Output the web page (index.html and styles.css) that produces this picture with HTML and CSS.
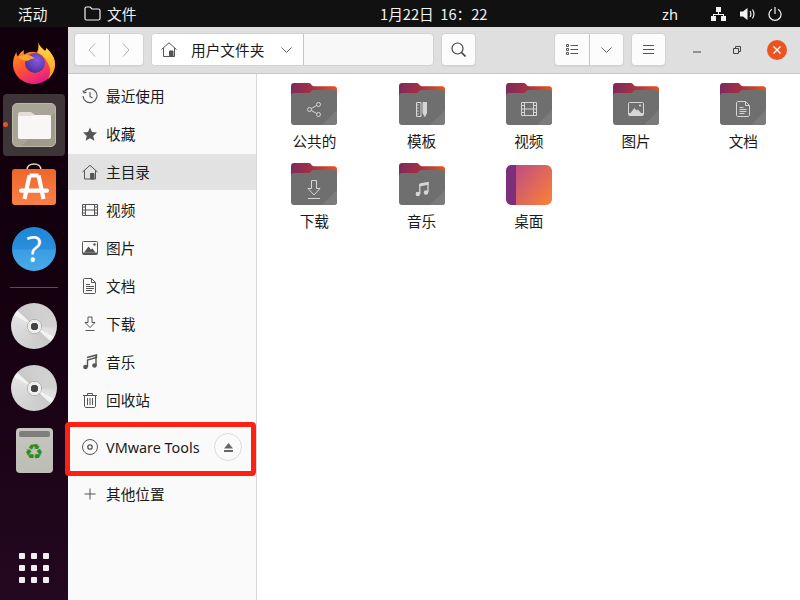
FILE: index.html
```html
<!DOCTYPE html>
<html lang="zh">
<head>
    <meta charset="UTF-8">
    <title>文件</title>
    <link rel="stylesheet" href="styles.css">
</head>
<body>
    <svg class="defs" width="0" height="0">
        <defs>
            <linearGradient id="folderBack" x1="0" y1="0" x2="1" y2="0">
                <stop offset="0" stop-color="#7d2a5c"/>
                <stop offset="0.5" stop-color="#a8333f"/>
                <stop offset="1" stop-color="#e9541f"/>
            </linearGradient>
            <linearGradient id="desktopFill" x1="0" y1="0" x2="1" y2="0.7">
                <stop offset="0" stop-color="#b5458f"/>
                <stop offset="1" stop-color="#f47a3e"/>
            </linearGradient>
            <linearGradient id="helpFill" x1="0" y1="0" x2="0" y2="1">
                <stop offset="0" stop-color="#1f86d6"/>
                <stop offset="0.5" stop-color="#2a8fdc"/>
                <stop offset="0.52" stop-color="#3a9de2"/>
                <stop offset="1" stop-color="#4aaae8"/>
            </linearGradient>
            <linearGradient id="storeFill" x1="0" y1="0" x2="0" y2="1">
                <stop offset="0" stop-color="#ee672b"/>
                <stop offset="1" stop-color="#f98048"/>
            </linearGradient>
            <linearGradient id="foxBody" x1="0.2" y1="0.1" x2="0.6" y2="1">
                <stop offset="0" stop-color="#ff9a18"/>
                <stop offset="0.55" stop-color="#ff4f3a"/>
                <stop offset="1" stop-color="#e5198a"/>
            </linearGradient>
            <linearGradient id="foxFlame" x1="0" y1="0" x2="0" y2="1">
                <stop offset="0" stop-color="#ffe14a"/>
                <stop offset="1" stop-color="#ff9a10"/>
            </linearGradient>
            <radialGradient id="foxGlobe" cx="0.6" cy="0.35" r="0.7">
                <stop offset="0" stop-color="#8a5ae0"/>
                <stop offset="1" stop-color="#4a2c9a"/>
            </radialGradient>
            <symbol id="folder" viewBox="0 0 46 42">
                <path d="M3 0h15c2 0 2.500 3.200 5 3.200h20c1.800 0 3 1.200 3 3V30H0V3c0-1.800 1.200-3 3-3z" fill="url(#folderBack)"/>
                <path d="M3 10h15c2 0 2-3 4.500-3H43c1.800 0 3 1.200 3 3v29c0 1.800-1.200 3-3 3H3c-1.800 0-3-1.200-3-3V13c0-1.800 1.200-3 3-3z" fill="#6f6f6f"/>
                <path d="M46 27v12c0 1.800-1.200 3-3 3H31z" fill="#7b7b7b"/>
            </symbol>
        </defs>
    </svg>

    <header class="topbar">
        <span class="activities">活动</span>
        <svg class="top-folder" width="17" height="15" viewBox="0 0 17 15" fill="none" stroke="#f2f2f2" stroke-width="1.200">
            <path d="M1 12.500V2.500C1 1.500 1.600 1 2.500 1h3.700l1.800 2h6.500c1 0 1.500.6 1.500 1.500v8c0 1-.6 1.500-1.500 1.500h-12C1.500 14 1 13.500 1 12.500z"/>
        </svg>
        <span class="top-app">文件</span>
        <span class="clock">1月22日&nbsp; 16：22</span>
        <span class="lang">zh</span>
        <svg class="tray-net" width="15" height="14" viewBox="0 0 15 14" fill="#f2f2f2">
            <path d="M5 0h5v5H8v2h5v2h2v5h-5V9h2V8H3v1h2v5H0V9h2V7h5V5H5z"/>
        </svg>
        <svg class="tray-vol" width="15" height="14" viewBox="0 0 15 14">
            <path d="M0 4.500h3L7.500 1v12L3 9.500H0z" fill="#f2f2f2"/>
            <path d="M10 4c1 1.700 1 4.300 0 6M12.500 2.500c1.800 2.800 1.800 6.200 0 9" fill="none" stroke="#f2f2f2" stroke-width="1.200"/>
        </svg>
        <svg class="tray-power" width="14" height="14" viewBox="0 0 14 14" fill="none" stroke="#f2f2f2" stroke-width="1.200">
            <path d="M4 2.200a6 6 0 1 0 6 0M7 0v7"/>
        </svg>
    </header>

    <div class="desktop">
        <nav class="dock">
            <div class="dock-slot">
                <svg width="44" height="44" viewBox="0 0 44 44">
                    <path d="M26 1c1 4 4 6 7 9 1-1 1.500-2 1.500-3 5 5 8.500 10 8.500 16 0 11-9.500 20-21 20S1 34 1 23c0-5 1.500-9 3.500-12 0 2 .5 3.500 1.500 4.500C7.500 12 10 10 12 9c-.5 2-.3 3.500.5 4.500 3-2.500 8-3.500 12-2C27 8 27 4 26 1z" fill="url(#foxBody)"/>
                    <path d="M26 1c1 4 4 6 7 9 1-1 1.500-2 1.500-3 5 5 8.500 10 8.500 16 0 6-2.500 11-7 15 2-4 3-8 1-13-2-6-6-11-11-13 1-4 1-8 0-11z" fill="url(#foxFlame)"/>
                    <circle cx="23" cy="22" r="10" fill="url(#foxGlobe)"/>
                    <path d="M6 16c3-2 8-2.500 12-1.500 3 1 5 3 5 3-2.500-.3-5 .5-6.500 2-3 .8-8-1-10.500-3.500z" fill="#ffa62b"/>
                </svg>
            </div>
            <div class="dock-slot is-active">
                <i class="run-dot"></i>
                <div class="files-tile">
                    <svg width="33" height="27" viewBox="0 0 33 27">
                        <path d="M2 0h11l4 3h14c1.200 0 2 .8 2 2v20c0 1.200-.8 2-2 2H2c-1.200 0-2-.8-2-2V2C0 .8.800 0 2 0z" fill="#e3dfd8"/>
                        <path d="M2 4h10c2 0 3-1 5-1h14c1.200 0 2 .8 2 2v20c0 1.200-.8 2-2 2H2c-1.200 0-2-.8-2-2V6c0-1.200.8-2 2-2z" fill="#f8f7f5"/>
                    </svg>
                </div>
            </div>
            <div class="dock-slot">
                <svg class="store-icon" width="44" height="42" viewBox="0 0 44 42">
                    <path d="M15 7c0-8 14-8 14 0" fill="none" stroke="#eadbc8" stroke-width="1.600"/>
                    <rect y="6" width="44" height="36" rx="3" fill="url(#storeFill)"/>
                    <path d="M17.500 12.500h9M17.500 12.500 12.500 36M26.500 12.500l5 23.500" fill="none" stroke="#fff" stroke-width="4.200"/>
                    <rect x="7" y="25.500" width="30" height="4.200" rx="2" fill="#fff"/>
                </svg>
            </div>
            <div class="dock-slot">
                <div class="help-icon">
                    <svg width="44" height="44" viewBox="0 0 44 44"><circle cx="22" cy="22" r="22" fill="url(#helpFill)"/></svg>
                    <span class="help-mark">?</span>
                </div>
            </div>
            <hr class="dock-sep">
            <div class="dock-slot"><div class="cd"><i></i></div></div>
            <div class="dock-slot"><div class="cd"><i></i></div></div>
            <div class="dock-slot">
                <div class="trash-tile">
                    <i class="trash-lid"></i>
                    <span class="trash-mark">♻</span>
                </div>
            </div>
            <div class="dock-slot dock-grid">
                <div class="app-grid">
                    <i></i><i></i><i></i><i></i><i></i><i></i><i></i><i></i><i></i>
                </div>
            </div>
        </nav>

        <main class="window">
            <div class="headerbar">
                <div class="btn-group nav-group">
                    <button class="tool">
                        <svg width="8" height="14" viewBox="0 0 8 14" fill="none" stroke="#b0b0b0"><path d="M7 .5 1 7l6 6.500"/></svg>
                    </button>
                    <button class="tool">
                        <svg width="8" height="14" viewBox="0 0 8 14" fill="none" stroke="#b0b0b0"><path d="M1 .5 7 7l-6 6.500"/></svg>
                    </button>
                </div>
                <div class="pathbar">
                    <div class="path-crumb">
                        <svg width="16" height="15" viewBox="0 0 16 15" fill="none" stroke="#555"><path d="M.5 7.500 8 .8l7.500 6.700M2.500 6v8.500h11V6"/><path d="M8.500 9h3.500v5.500H8.500z" fill="#555"/></svg>
                        <span>用户文件夹</span>
                        <svg width="11" height="6" viewBox="0 0 11 6" fill="none" stroke="#666"><path d="m.5.500 5 5 5-5"/></svg>
                    </div>
                </div>
                <button class="single search-btn">
                    <svg width="15" height="15" viewBox="0 0 15 15" fill="none" stroke="#444" stroke-width="1.200"><circle cx="6.500" cy="6.500" r="5.500"/><path d="m10.500 10.500 4 4" stroke-width="1.600"/></svg>
                </button>
                <div class="btn-group view-group">
                    <button class="tool">
                        <svg width="12" height="11" viewBox="0 0 12 11" fill="none" stroke="#555"><path d="M.5.500h2v2h-2zM.5 4.500h2v2h-2zM.5 8.500h2v2h-2zM4.500 1.500H12M4.500 5.500H12M4.500 9.500H12"/></svg>
                    </button>
                    <button class="tool">
                        <svg width="11" height="6" viewBox="0 0 11 6" fill="none" stroke="#666"><path d="m.5.500 5 5 5-5"/></svg>
                    </button>
                </div>
                <button class="single menu-btn">
                    <svg width="11" height="10" viewBox="0 0 11 10" stroke="#555"><path d="M0 .5h11M0 4.500h11M0 8.500h11"/></svg>
                </button>
                <div class="win-controls">
                    <svg class="win-min" width="8" height="2" viewBox="0 0 8 2"><path d="M0 1h8" stroke="#444"/></svg>
                    <svg class="win-max" width="8" height="8" viewBox="0 0 8 8" fill="none" stroke="#444"><path d="M.5 2.500h5v5h-5zM2.500 2.500v-2h5v5h-2"/></svg>
                    <span class="close-btn">
                        <svg width="8" height="8" viewBox="0 0 8 8" stroke="#fff" stroke-width="1.400"><path d="m.5.500 7 7M7.500.5l-7 7"/></svg>
                    </span>
                </div>
            </div>

            <div class="window-body">
                <aside class="sidebar">
                    <a class="side-row">
                        <svg width="16" height="16" viewBox="0 0 16 16" fill="none" stroke="#555" stroke-width="1.100"><path d="M2.300 3.500A7 7 0 1 1 1 8M.8 2.500l1.300 2.300 2.400-.6M8 4v4.500l2.500 1.500"/></svg>
                        <span class="side-label">最近使用</span>
                    </a>
                    <a class="side-row">
                        <svg width="16" height="16" viewBox="0 0 16 16" fill="#555"><path d="m8 1.500 2 4.600 5 .5-3.800 3.300 1.200 4.900L8 12.200l-4.400 2.600 1.200-4.900L1 6.600l5-.5z"/></svg>
                        <span class="side-label">收藏</span>
                    </a>
                    <a class="side-row is-selected">
                        <svg width="16" height="16" viewBox="0 0 16 16" fill="none" stroke="#555"><path d="M.5 8 8 1.300 15.500 8M2.500 6.500v8.500h11V6.500"/><path d="M8.500 9.500h3.500V15H8.500z" fill="#555"/></svg>
                        <span class="side-label">主目录</span>
                    </a>
                    <a class="side-row">
                        <svg width="16" height="16" viewBox="0 0 16 16" fill="none" stroke="#555"><path d="M.5 2.500h15v11H.5zM3.500 2.500v11M12.500 2.500v11M3.500 8h9"/><path d="M.5 5h3M.5 8h3M.5 11h3M12.500 5h3M12.500 8h3M12.500 11h3"/></svg>
                        <span class="side-label">视频</span>
                    </a>
                    <a class="side-row">
                        <svg width="16" height="16" viewBox="0 0 16 16"><rect x=".5" y="1.500" width="15" height="13" rx="1" fill="none" stroke="#555"/><path d="M2 12.500 6.500 6.500l2.500 3 1.500-1 3 4z" fill="#555"/><circle cx="12.500" cy="4.500" r="1.200" fill="#555"/><path d="M1 12.500h14v2H1z" fill="#555"/></svg>
                        <span class="side-label">图片</span>
                    </a>
                    <a class="side-row">
                        <svg width="16" height="16" viewBox="0 0 16 16" fill="none" stroke="#555"><path d="M2.500.5h7l4 4v10c0 .6-.4 1-1 1h-10c-.6 0-1-.4-1-1v-13c0-.6.400-1 1-1zM9.500.5v4h4M4 6.500h4M4 8.500h8M4 10.500h8M4 12.500h6"/></svg>
                        <span class="side-label">文档</span>
                    </a>
                    <a class="side-row">
                        <svg width="16" height="16" viewBox="0 0 16 16" fill="none" stroke="#555"><path d="M6 1h4v5.500h3L8 11.500 3 6.500h3zM3.500 14.500h9"/></svg>
                        <span class="side-label">下载</span>
                    </a>
                    <a class="side-row">
                        <svg width="16" height="16" viewBox="0 0 16 16"><path d="M5 3.500 14.500 1v2.500L5.500 6v7" fill="none" stroke="#555" stroke-width="1.400"/><path d="M14 1.500v10" stroke="#555" stroke-width="1.400"/><circle cx="3.500" cy="13" r="2.300" fill="#555"/><circle cx="12.500" cy="11.500" r="2.300" fill="#555"/></svg>
                        <span class="side-label">音乐</span>
                    </a>
                    <a class="side-row">
                        <svg width="16" height="16" viewBox="0 0 16 16" fill="none" stroke="#555"><path d="M1 3.500h14M5.500 3V1.500h5V3M2.500 3.500v10.500c0 .8.500 1.500 1.500 1.500h8c1 0 1.500-.7 1.500-1.500V3.500M5.500 6v7M8 6v7M10.500 6v7"/></svg>
                        <span class="side-label">回收站</span>
                    </a>
                    <div class="side-sep"></div>
                    <a class="side-row">
                        <svg width="16" height="16" viewBox="0 0 16 16" fill="none" stroke="#555"><circle cx="8" cy="8" r="7.500"/><circle cx="8" cy="8" r="2.200" stroke-width="1.300"/></svg>
                        <span class="latin">VMware Tools</span>
                        <span class="eject">
                            <svg width="9" height="9" viewBox="0 0 9 9" fill="#666"><path d="M4.500 0 9 5.500H0zM0 7h9v2H0z"/></svg>
                        </span>
                    </a>
                    <div class="side-sep"></div>
                    <a class="side-row">
                        <svg width="16" height="16" viewBox="0 0 16 16" stroke="#555"><path d="M8 2.500v11M2.500 8h11"/></svg>
                        <span class="side-label">其他位置</span>
                    </a>
                </aside>

                <section class="files">
                    <figure class="item">
                        <div class="folder">
                            <svg class="folder-bg" width="46" height="42"><use href="#folder"/></svg>
                            <svg class="glyph" width="14" height="15" viewBox="0 0 14 15" fill="none" stroke="#d6d6d6"><circle cx="2.500" cy="7.500" r="2"/><circle cx="11.500" cy="2.500" r="2"/><circle cx="11.500" cy="12.500" r="2"/><path d="m4.300 6.500 5.400-3M4.300 8.500l5.400 3"/></svg>
                        </div>
                        <figcaption>公共的</figcaption>
                    </figure>
                    <figure class="item">
                        <div class="folder">
                            <svg class="folder-bg" width="46" height="42"><use href="#folder"/></svg>
                            <svg class="glyph" width="11" height="15" viewBox="0 0 11 15" fill="none" stroke="#d6d6d6"><path d="M.5.500h4.500v14H.5zM.5 3h2M.5 6h2M.5 9h2M.5 12h2"/><path d="M7 .5h3.500v10.500l-1.700 3.500L7 11z" fill="#d6d6d6"/></svg>
                        </div>
                        <figcaption>模板</figcaption>
                    </figure>
                    <figure class="item">
                        <div class="folder">
                            <svg class="folder-bg" width="46" height="42"><use href="#folder"/></svg>
                            <svg class="glyph" width="16" height="14" viewBox="0 0 16 14" fill="none" stroke="#d6d6d6"><path d="M.5.500h15v13H.5zM3.500.5v13M12.500.5v13M3.500 7h9M.5 3.500h3M.5 7h3M.5 10.500h3M12.500 3.500h3M12.500 7h3M12.500 10.500h3"/></svg>
                        </div>
                        <figcaption>视频</figcaption>
                    </figure>
                    <figure class="item">
                        <div class="folder">
                            <svg class="folder-bg" width="46" height="42"><use href="#folder"/></svg>
                            <svg class="glyph" width="16" height="14" viewBox="0 0 16 14"><rect x=".5" y=".5" width="15" height="13" rx="1" fill="none" stroke="#d6d6d6"/><path d="m2.500 11 4-5 2 2.500 1.500-1 3 3.500z" fill="#d6d6d6"/><circle cx="12" cy="3.500" r="1.100" fill="#d6d6d6"/><path d="M1 11h14v2.500H1z" fill="#d6d6d6"/></svg>
                        </div>
                        <figcaption>图片</figcaption>
                    </figure>
                    <figure class="item">
                        <div class="folder">
                            <svg class="folder-bg" width="46" height="42"><use href="#folder"/></svg>
                            <svg class="glyph" width="14" height="16" viewBox="0 0 14 16" fill="none" stroke="#d6d6d6"><path d="M2 .5h7.500l4 4V14c0 .8-.6 1.500-1.500 1.500H2c-.9 0-1.500-.7-1.500-1.500V2C.5 1.200 1.100.5 2 .5zM9.500.5v4h4M3.500 6.500h4M3.500 8.500h7M3.500 10.500h7M3.500 12.500h5"/></svg>
                        </div>
                        <figcaption>文档</figcaption>
                    </figure>
                    <figure class="item">
                        <div class="folder">
                            <svg class="folder-bg" width="46" height="42"><use href="#folder"/></svg>
                            <svg class="glyph" width="14" height="19" viewBox="0 0 14 19" fill="none" stroke="#d6d6d6"><path d="M4.500 .5h5v8h3.500L7 15 1 8.500h3.500zM1 18.500h12"/></svg>
                        </div>
                        <figcaption>下载</figcaption>
                    </figure>
                    <figure class="item">
                        <div class="folder">
                            <svg class="folder-bg" width="46" height="42"><use href="#folder"/></svg>
                            <svg class="glyph" width="14" height="16" viewBox="0 0 14 16"><path d="M4.500 2.500 13.500.8v3l-9 1.700z" fill="#d6d6d6"/><path d="M4.800 3v10M13 1v10" stroke="#d6d6d6" stroke-width="1.300"/><circle cx="2.800" cy="13" r="2.200" fill="#d6d6d6"/><circle cx="11" cy="11.500" r="2.200" fill="#d6d6d6"/></svg>
                        </div>
                        <figcaption>音乐</figcaption>
                    </figure>
                    <figure class="item">
                        <div class="folder">
                            <svg class="folder-bg" width="46" height="42" viewBox="0 0 46 42">
                                <rect y="2" width="46" height="40" rx="6" fill="url(#desktopFill)"/>
                                <path d="M6 2h4v40H6c-3.500 0-6-2.500-6-6V8c0-3.500 2.500-6 6-6z" fill="#7d2f7c"/>
                            </svg>
                        </div>
                        <figcaption>桌面</figcaption>
                    </figure>
                </section>
            </div>
        </main>
    </div>

    <!-- red annotation round the VMware Tools row -->
    <div class="callout"></div>
</body>
</html>
```

FILE: styles.css
```css
* {
    box-sizing: border-box;
}

body {
    margin: 0;
    width: 800px;
    height: 600px;
    overflow: hidden;
    display: flex;
    flex-direction: column;
    position: relative;
    font-family: "Noto Sans CJK SC", "Noto Sans", sans-serif;
    font-size: 14.67px;
    color: #1a1a1a;
    background: #fff;
}

.defs {
    position: absolute;
}

i {
    display: block;
}

/* top bar */
.topbar {
    height: 27px;
    flex: none;
    display: flex;
    align-items: center;
    background: #111;
    color: #f2f2f2;
    padding-left: 18px;
}

.activities {
    width: 66px;
}

.top-folder {
    margin-right: 6px;
}

.top-app {
    width: 273px;
}

.clock {
    width: 282px;
}

.lang {
    width: 49px;
    font-family: "Noto Sans", sans-serif;
}

.tray-vol {
    margin-left: 14px;
}

.tray-power {
    margin-left: 13px;
}

/* dock */
.desktop {
    flex: 1;
    display: flex;
    min-height: 0;
}

.dock {
    width: 68px;
    flex: none;
    display: flex;
    flex-direction: column;
    align-items: center;
    padding: 5px 0 1px;
    background: linear-gradient(180deg, #12000c 0%, #14000f 45%, #240820 100%);
}

.dock-slot {
    width: 62px;
    height: 62px;
    flex: none;
    display: flex;
    align-items: center;
    justify-content: center;
    position: relative;
    border-radius: 4px;
}

.dock-slot.is-active {
    background: #3e3539;
}

.dock-grid {
    margin-top: auto;
}

.run-dot {
    position: absolute;
    left: 0;
    top: 28px;
    width: 5px;
    height: 5px;
    border-radius: 50%;
    background: #e95420;
}

.files-tile {
    width: 44px;
    height: 44px;
    display: flex;
    align-items: center;
    justify-content: center;
    border-radius: 5px;
    padding-top: 1px;
    border: 1px solid #bdb9aa;
    background: linear-gradient(135deg, #a8a596 0%, #a8a596 60%, #9e9a8a 60%, #a19d8d 100%);
}

.store-icon {
    margin-bottom: 6px;
}

.help-icon {
    width: 44px;
    height: 44px;
    position: relative;
}

.help-mark {
    position: absolute;
    left: 0;
    right: 0;
    top: 0;
    text-align: center;
    font-family: "Open Sans", sans-serif;
    font-size: 36px;
    line-height: 44px;
    color: #fff;
}

.dock-sep {
    width: 48px;
    height: 1px;
    flex: none;
    margin: 7px 0;
    border: 0;
    background: #5a5056;
}

.cd {
    width: 46px;
    height: 46px;
    border-radius: 50%;
    display: flex;
    align-items: center;
    justify-content: center;
    background: conic-gradient(from 0deg, #cfcfcf 0deg, #d2d2d2 90deg, #dedede 100deg, #e2e2e2 118deg, #f5f5f5 120deg, #f0f0f0 132deg, #c9c9c9 134deg, #cfcfcf 180deg, #dcdcdc 270deg, #e2e2e2 298deg, #f5f5f5 300deg, #f0f0f0 312deg, #c9c9c9 314deg, #cfcfcf 360deg);
}

.cd i {
    width: 15px;
    height: 15px;
    border-radius: 50%;
    background: radial-gradient(circle, #444 0 3.500px, #eee 4px 6.500px, #b5ab9a 7px);
}

.trash-tile {
    width: 37px;
    height: 45px;
    display: flex;
    flex-direction: column;
    align-items: center;
    padding-top: 3px;
    border-radius: 4px;
    background: linear-gradient(180deg, #c6c6c0, #bdbdb6);
}

.trash-lid {
    width: 31px;
    height: 6px;
    border-radius: 2px;
    background: #7e7e7a;
}

.trash-mark {
    font-family: "DejaVu Sans", sans-serif;
    font-size: 21px;
    line-height: 30px;
    color: #2f8a1e;
}

.app-grid {
    display: grid;
    grid-template-columns: repeat(3, 6px);
    gap: 6px;
}

.app-grid i {
    width: 6px;
    height: 6px;
    border-radius: 1px;
    background: #f0eef0;
}

/* window */
.window {
    flex: 1;
    min-width: 0;
    display: flex;
    flex-direction: column;
}

.headerbar {
    height: 47px;
    flex: none;
    display: flex;
    align-items: center;
    padding: 0 0 1px 6px;
    background: #dfdfdf;
    border-bottom: 1px solid #c6c6c6;
}

button {
    padding: 0;
    border: 0;
    background: none;
    display: flex;
    align-items: center;
    justify-content: center;
}

.btn-group {
    height: 33px;
    display: flex;
    background: #fcfcfc;
    border: 1px solid #d2d2d2;
    border-radius: 4px;
    box-shadow: 0 1px 1px rgba(0, 0, 0, 0.05);
}

.tool {
    width: 35px;
    height: 100%;
}

.tool + .tool {
    border-left: 1px solid #c6c6c6;
}

.nav-group {
    width: 70px;
}

.pathbar {
    width: 283px;
    height: 33px;
    margin-left: 7px;
    display: flex;
    background: #f8f8f8;
    border: 1px solid #d2d2d2;
    border-radius: 4px;
    overflow: hidden;
}

.path-crumb {
    width: 152px;
    display: flex;
    align-items: center;
    padding-left: 9px;
    background: #fff;
    border-right: 1px solid #c6c6c6;
}

.path-crumb span {
    margin: 0 17px 0 14px;
    white-space: nowrap;
}

.single {
    height: 33px;
    background: #fcfcfc;
    border: 1px solid #d2d2d2;
    border-radius: 4px;
    box-shadow: 0 1px 1px rgba(0, 0, 0, 0.05);
}

.search-btn {
    width: 35px;
    margin-left: 7px;
}

.view-group {
    width: 70px;
    margin-left: 78px;
}

.menu-btn {
    width: 35px;
    margin-left: 7px;
}

.win-controls {
    display: flex;
    align-items: center;
    margin-left: 27px;
}

.win-min {
    position: relative;
    top: 2px;
}

.win-max {
    margin-left: 32px;
}

.close-btn {
    width: 20px;
    height: 20px;
    margin-left: 26px;
    display: flex;
    align-items: center;
    justify-content: center;
    border-radius: 50%;
    background: #e95420;
}

.window-body {
    flex: 1;
    min-height: 0;
    display: flex;
}

/* sidebar */
.sidebar {
    width: 189px;
    flex: none;
    padding-top: 4px;
    background: #fafafa;
    border-right: 1px solid #d8d8d8;
}

.side-row {
    height: 36px;
    margin-bottom: 2px;
    display: flex;
    align-items: center;
    gap: 8px;
    padding-left: 14px;
}

.side-row.is-selected {
    background: #e2e2e2;
}

.side-label {
    margin-bottom: 2px;
}

.side-sep {
    height: 9px;
}

.latin {
    font-family: "Noto Sans", sans-serif;
    font-size: 14.400px;
    white-space: nowrap;
}

.eject {
    width: 28px;
    height: 28px;
    margin-left: auto;
    margin-right: 14px;
    display: flex;
    align-items: center;
    justify-content: center;
    border: 1px solid #dcdcdc;
    border-radius: 50%;
}

/* file grid */
.files {
    flex: 1;
    min-width: 0;
    display: grid;
    grid-template-columns: repeat(5, 107.250px);
    grid-auto-rows: 80px;
    align-content: start;
    padding: 9px 0 0 3.750px;
    background: #fff;
}

.item {
    margin: 0;
    display: flex;
    flex-direction: column;
    align-items: center;
}

.folder {
    width: 46px;
    height: 42px;
    position: relative;
    display: flex;
    align-items: center;
    justify-content: center;
}

.folder-bg {
    position: absolute;
    left: 0;
    top: 0;
}

.glyph {
    position: relative;
    top: 5px;
}

figcaption {
    margin-top: 5px;
    line-height: 22px;
}

/* annotation */
.callout {
    position: absolute;
    left: 65px;
    top: 422px;
    width: 191px;
    height: 54px;
    border: 5px solid #ff2014;
    border-radius: 4px;
}
```
